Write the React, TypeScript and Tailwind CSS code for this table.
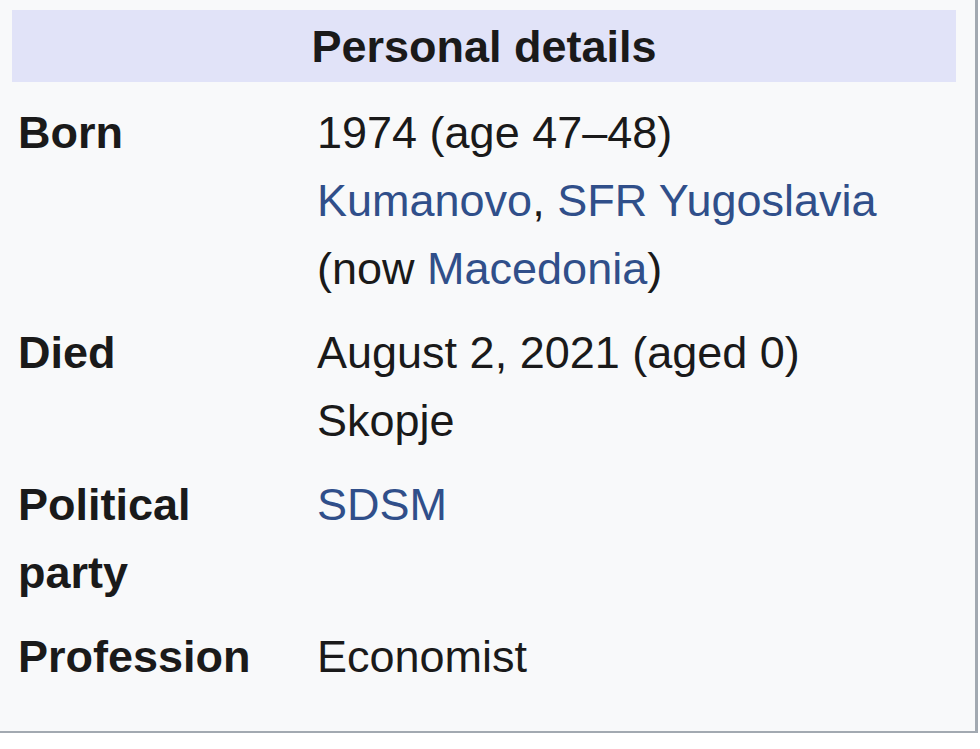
const rows: { label: string; value: React.ReactNode }[] = [
  {
    label: 'Born',
    value: (
      <>
        1974 (age 47–48)
        <br />
        <a className="text-[#304f8a]">Kumanovo</a>, <a className="text-[#304f8a]">SFR Yugoslavia</a>
        <br />
        (now <a className="text-[#304f8a]">Macedonia</a>)
      </>
    ),
  },
  {
    label: 'Died',
    value: (
      <>
        August 2, 2021 (aged 0)
        <br />
        Skopje
      </>
    ),
  },
  { label: 'Political party', value: <a className="text-[#304f8a]">SDSM</a> },
  { label: 'Profession', value: 'Economist' },
];

export default function App() {
  return (
    <div
      className="w-[980px] h-[749px] bg-white text-[#1a1a1a] text-[45px] leading-[68px]"
      style={{ fontFamily: '"Liberation Sans", Arial, sans-serif' }}
    >
      <div className="w-[978px] h-[733px] bg-[#f8f9fa] border-r-[3px] border-b-2 border-[#a2a9b1] pt-[10px] pl-[12px] pr-[19px]">
        {/* Section header */}
        <div className="h-[72px] pt-[3px] bg-[#e1e3f8] text-center font-bold">Personal details</div>

        {/* Rows */}
        <div className="mt-[17px] flex flex-col gap-[16px] pl-[6px]">
          {rows.map((r) => (
            <div key={r.label} className="grid grid-cols-[299px_1fr]">
              <div className="font-bold pr-[14px]">{r.label}</div>
              <div>{r.value}</div>
            </div>
          ))}
        </div>
      </div>
    </div>
  );
}
